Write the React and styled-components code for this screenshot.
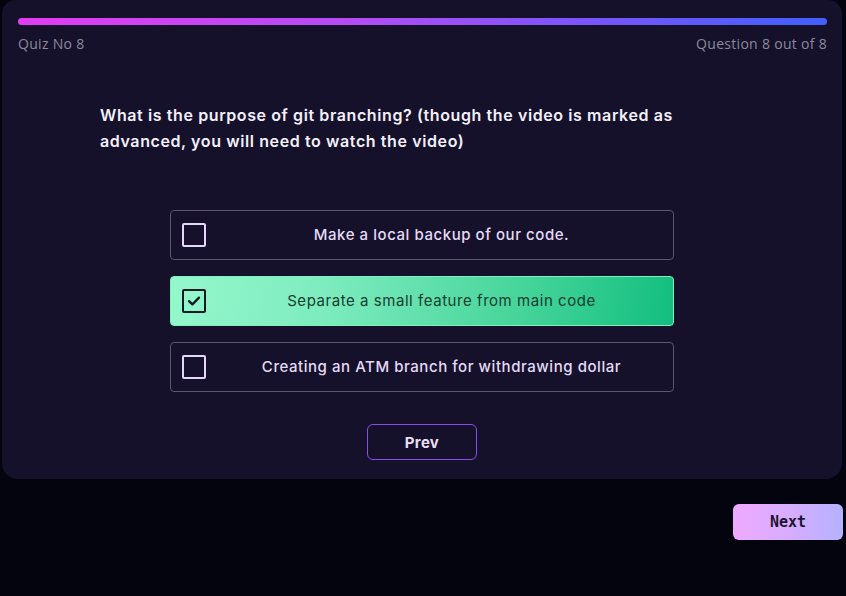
import React from "react";
import styled, { createGlobalStyle } from "styled-components";

const Global = createGlobalStyle`
  html, body { margin: 0; padding: 0; background: #04040f; }
  body { font-family: Inter, "Noto Sans", sans-serif; }
  * { box-sizing: border-box; }
`;

const Page = styled.div`
  width: 846px;
  min-height: 596px;
  background: #04040f;
  display: flex;
  flex-direction: column;
  align-items: stretch;
`;

const Card = styled.section`
  margin: 0 4px 0 2px;
  background: #16112b;
  border-radius: 14px 14px 16px 16px;
  padding: 18px 15px 19px 16px;
  display: flex;
  flex-direction: column;
`;

const Bar = styled.div`
  height: 7px;
  border-radius: 4px;
  background: linear-gradient(90deg, #e23cf2 0%, #b64cf5 40%, #7a55fb 70%, #4160ff 100%);
`;

const Meta = styled.div`
  display: flex;
  justify-content: space-between;
  margin-top: 9px;
  font-family: "Open Sans", Lato, sans-serif;
  font-size: 14px;
  line-height: 20px;
  color: #8c899c;
  letter-spacing: 0.3px;
`;

const Question = styled.h2`
  margin: 48px 0 0 82px;
  width: 600px;
  font-size: 16px;
  font-weight: 600;
  line-height: 26px;
  color: #f3f0fa;
  letter-spacing: 0.6px;
`;

const Options = styled.div`
  margin: 56px 0 0 152px;
  width: 504px;
  display: flex;
  flex-direction: column;
  gap: 16px;
`;

const Option = styled.label`
  height: 50px;
  display: flex;
  align-items: center;
  padding: 0 0 0 11px;
  border-radius: 4px;
  border: 1px solid ${(p) => (p.$selected ? "#7df0c0" : "#5b5570")};
  background: ${(p) =>
    p.$selected
      ? "linear-gradient(100deg, #95f8cc 0%, #7eecbf 30%, #45d49a 70%, #12be7e 100%)"
      : "transparent"};
  cursor: pointer;
`;

const Box = styled.span`
  width: 24px;
  height: 24px;
  flex: none;
  border-radius: 2px;
  border: 2px solid ${(p) => (p.$selected ? "#0f1a26" : "#e6d6fa")};
  display: flex;
  align-items: center;
  justify-content: center;
`;

const OptionText = styled.span`
  flex: 1;
  text-align: center;
  margin: -1px 0 0 4px;
  font-size: 15px;
  font-weight: ${(p) => (p.$selected ? 400 : 500)};
  color: ${(p) => (p.$selected ? "#173d30" : "#e4dbf6")};
  letter-spacing: 0.55px;
`;

const PrevRow = styled.div`
  display: flex;
  justify-content: center;
  margin-top: 32px;
  padding-right: 1px;
`;

const PrevButton = styled.button`
  width: 110px;
  height: 36px;
  border-radius: 6px;
  border: 1px solid #8a4ced;
  background: transparent;
  color: #e8def8;
  font-family: Inter, sans-serif;
  font-size: 15px;
  font-weight: 700;
  letter-spacing: 0.3px;
  cursor: pointer;
`;

const Footer = styled.div`
  display: flex;
  justify-content: flex-end;
  margin-top: 25px;
  padding-right: 3px;
`;

const NextButton = styled.button`
  width: 110px;
  height: 36px;
  border-radius: 6px;
  border: none;
  background: linear-gradient(90deg, #eeaaff 0%, #d8acff 50%, #b4b2ff 100%);
  color: #1c1630;
  font-family: "DejaVu Sans Mono", "Liberation Mono", monospace;
  font-size: 15px;
  font-weight: 700;
  cursor: pointer;
`;

const Check = () => (
  <svg width="16" height="16" viewBox="0 0 16 16" fill="none">
    <path d="M3 8.2 L6.4 11.4 L13 4.6" stroke="#0f1a26" strokeWidth="2.3" strokeLinecap="round" strokeLinejoin="round" />
  </svg>
);

const options = [
  { text: "Make a local backup of our code.", selected: false },
  { text: "Separate a small feature from main code", selected: true },
  { text: "Creating an ATM branch for withdrawing dollar", selected: false },
];

export default function App() {
  return (
    <Page>
      <Global />
      <Card>
        <Bar />
        <Meta>
          <span>Quiz No 8</span>
          <span>Question 8 out of 8</span>
        </Meta>
        <Question>
          What is the purpose of git branching? (though the video is marked as advanced, you will need to watch the video)
        </Question>
        <Options>
          {options.map((o) => (
            <Option key={o.text} $selected={o.selected}>
              <Box $selected={o.selected}>{o.selected && <Check />}</Box>
              <OptionText $selected={o.selected}>{o.text}</OptionText>
            </Option>
          ))}
        </Options>
        <PrevRow>
          <PrevButton>Prev</PrevButton>
        </PrevRow>
      </Card>
      <Footer>
        <NextButton>Next</NextButton>
      </Footer>
    </Page>
  );
}
